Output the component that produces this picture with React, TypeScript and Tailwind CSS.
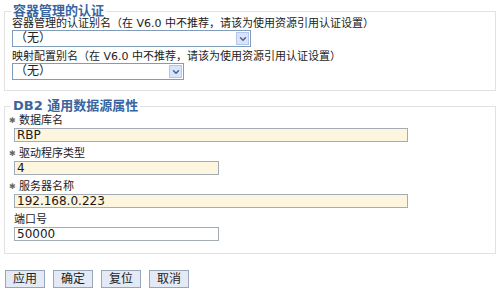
import { ChevronDown } from 'lucide-react';

const cjk = "font-['DejaVu_Sans','Noto_Sans_CJK_SC',sans-serif]";

function Select({ width }: { width: string }) {
  return (
    <div className={`${width} h-[17px] flex items-center border border-[#7f9db9] bg-white`}>
      <span className="flex-1 pl-[2px] text-[12px] leading-[15px] text-[#222]">（无）</span>
      <span className="w-[13px] h-[13px] mr-[1px] flex items-center justify-center border border-[#b5c7ee] bg-[#d8e4fb]">
        <ChevronDown className="w-[10px] h-[10px] text-[#4d6185]" strokeWidth={3.5} />
      </span>
    </div>
  );
}

function Field({ label, value, width, required, plain }: { label: string; value: string; width: string; required?: boolean; plain?: boolean }) {
  return (
    <div className="mb-[6px]">
      <div className="flex items-center h-[12px] text-[11px] leading-[12px] text-[#222]">
        {required ? <span className="w-[10px] ml-[-4px] text-[8px] text-[#6f6a50]">✱</span> : <span className="w-[1px]" />}
        <span>{label}</span>
      </div>
      <div className={`${width} h-[14px] mt-[1px] ml-[1px] border border-[#a4acb4] ${plain ? 'bg-white' : 'bg-[#fdf5de]'} pl-[2px] text-[12px] leading-[12px] text-[#1a1a1a]`}>
        {value}
      </div>
    </div>
  );
}

export default function App() {
  return (
    <div className={`w-[501px] h-[297px] bg-white overflow-hidden [text-spacing-trim:space-all] ${cjk}`}>
      <fieldset className="ml-[4px] mt-[4px] w-[492px] border border-[#e2e2e2] pl-[7px] pb-[10px]">
        <legend className="ml-[-1px] px-[2px] text-[13px] leading-[14px] font-bold text-[#3a65a0]">容器管理的认证</legend>
        <div className="text-[11px] leading-[12px] text-[#222]">容器管理的认证别名（在 V6.0 中不推荐，请该为使用资源引用认证设置）</div>
        <Select width="w-[239px]" />
        <div className="mt-[4px] text-[11px] leading-[12px] text-[#222]">映射配置别名（在 V6.0 中不推荐，请该为使用资源引用认证设置）</div>
        <Select width="w-[172px]" />
      </fieldset>

      <fieldset className="ml-[4px] mt-[8px] w-[492px] border border-[#e2e2e2] pl-[8px] pb-[6px]">
        <legend className="ml-[-2px] px-[2px] text-[13px] leading-[14px] font-bold text-[#3a65a0]">DB2 通用数据源属性</legend>
        <div className="mt-[2px]" />
        <Field label="数据库名" value="RBP" width="w-[394px]" required />
        <Field label="驱动程序类型" value="4" width="w-[205px]" required />
        <Field label="服务器名称" value="192.168.0.223" width="w-[394px]" required />
        <Field label="端口号" value="50000" width="w-[205px]" plain />
      </fieldset>

      <div className="mt-[16px] ml-[5px] flex gap-[8px]">
        {['应用', '确定', '复位', '取消'].map((b) => (
          <button key={b} className="w-[40px] h-[18px] border border-[#97a6b8] bg-[#e3eaf5] text-[12px] leading-[16px] text-[#222]">
            {b}
          </button>
        ))}
      </div>
    </div>
  );
}
